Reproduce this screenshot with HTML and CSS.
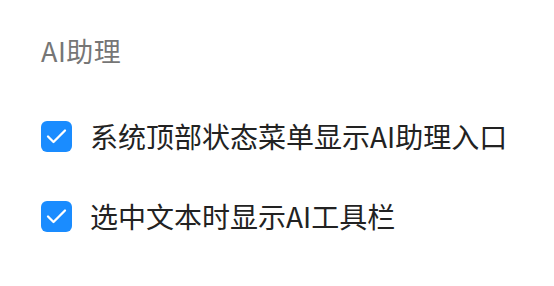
FILE: index.html
```html
<!DOCTYPE html>
<html lang="zh-CN">
<head>
    <meta charset="UTF-8">
    <meta name="viewport" content="width=device-width, initial-scale=1.0">
    <title>AI助理</title>
    <link rel="stylesheet" href="styles.css">
</head>
<body>

    <!-- AI助理 settings section -->
    <section class="settings">
        <h2 class="settings-title">AI助理</h2>

        <label class="option">
            <input type="checkbox" class="option-input" checked>
            <span class="option-box">
                <svg viewBox="0 0 31 31" width="31" height="31">
                    <path d="M7 15.5 L12.5 21 L24 9.5" fill="none" stroke="#fff" stroke-width="2.3" stroke-linecap="round" stroke-linejoin="round"/>
                </svg>
            </span>
            <span class="option-text">系统顶部状态菜单显示AI助理入口</span>
        </label>

        <label class="option">
            <input type="checkbox" class="option-input" checked>
            <span class="option-box">
                <svg viewBox="0 0 31 31" width="31" height="31">
                    <path d="M7 15.5 L12.5 21 L24 9.5" fill="none" stroke="#fff" stroke-width="2.3" stroke-linecap="round" stroke-linejoin="round"/>
                </svg>
            </span>
            <span class="option-text">选中文本时显示AI工具栏</span>
        </label>
    </section>

</body>
</html>
```

FILE: styles.css
```css
body {
    margin: 0;
    background: #fff;
    font-family: "Noto Sans CJK SC", "Noto Sans", sans-serif;
}

.settings {
    display: flex;
    flex-direction: column;
    padding: 34px 0 0 41px;
}

/* Section heading */
.settings-title {
    margin: 0 0 48px;
    font-size: 27px;
    font-weight: 400;
    line-height: 34px;
    letter-spacing: 0.5px;
    color: #767676;
}

/* Checkbox rows */
.option {
    display: flex;
    align-items: center;
    gap: 18px;
    height: 40px;
    margin-bottom: 40px;
    cursor: pointer;
}

.option-input {
    display: none;
}

.option-box {
    display: flex;
    flex-shrink: 0;
    width: 31px;
    height: 31px;
    border-radius: 6px;
    background: #1a8cff;
}

.option-text {
    font-size: 28px;
    line-height: 40px;
    color: #222;
}
```
